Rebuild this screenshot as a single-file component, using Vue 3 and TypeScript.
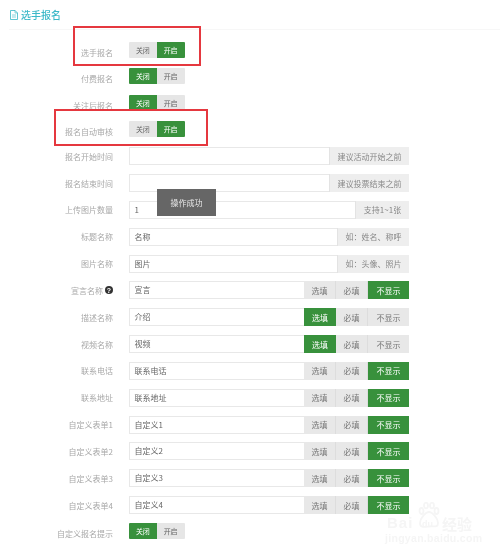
<script setup lang="ts">
type Row =
  | { label: string; kind: 'toggle'; on: number; help?: boolean }
  | { label: string; kind: 'input'; value: string; addon: string; addonClass: string }
  | { label: string; kind: 'triple'; value: string; on: number; help?: boolean }

const toggles: Row[] = [
  { label: '选手报名', kind: 'toggle', on: 1 },
  { label: '付费报名', kind: 'toggle', on: 0 },
  { label: '关注后报名', kind: 'toggle', on: 0 },
  { label: '报名自动审核', kind: 'toggle', on: 1 },
]
const rows: Row[] = [
  { label: '报名开始时间', kind: 'input', value: '', addon: '建议活动开始之前', addonClass: 'wide' },
  { label: '报名结束时间', kind: 'input', value: '', addon: '建议投票结束之前', addonClass: 'wide' },
  { label: '上传图片数量', kind: 'input', value: '1', addon: '支持1~1张', addonClass: 'small' },
  { label: '标题名称', kind: 'input', value: '名称', addon: '如：姓名、称呼', addonClass: 'mid' },
  { label: '图片名称', kind: 'input', value: '图片', addon: '如：头像、照片', addonClass: 'mid' },
  { label: '宣言名称', kind: 'triple', value: '宣言', on: 2, help: true },
  { label: '描述名称', kind: 'triple', value: '介绍', on: 0 },
  { label: '视频名称', kind: 'triple', value: '视频', on: 0 },
  { label: '联系电话', kind: 'triple', value: '联系电话', on: 2 },
  { label: '联系地址', kind: 'triple', value: '联系地址', on: 2 },
  { label: '自定义表单1', kind: 'triple', value: '自定义1', on: 2 },
  { label: '自定义表单2', kind: 'triple', value: '自定义2', on: 2 },
  { label: '自定义表单3', kind: 'triple', value: '自定义3', on: 2 },
  { label: '自定义表单4', kind: 'triple', value: '自定义4', on: 2 },
  { label: '自定义报名提示', kind: 'toggle', on: 0 },
]
const toggleText = ['关闭', '开启']
const tripleText = ['选填', '必填', '不显示']
</script>

<template>
  <div class="page">
    <div class="head">
      <svg class="doc" viewBox="0 0 8 10" width="8" height="10" fill="none" stroke="#3bb8c8" stroke-width="0.8">
        <path d="M.5.5h4.600L7.500 3v6.500H.5z" />
        <path d="M5 .5V3h2.500M2 5h4M2 7h4" stroke-width="0.6" />
      </svg>
      <span class="title">选手报名</span>
    </div>
    <div class="tops">
      <div v-for="r in toggles" :key="r.label" class="row top">
        <label class="lab low">{{ r.label }}</label>
        <div v-if="r.kind === 'toggle'" class="toggle">
          <span v-for="(t, i) in toggleText" :key="t" class="btn" :class="{ on: i === r.on }">{{ t }}</span>
        </div>
      </div>
    </div>
    <div class="rows">
      <div v-for="r in rows" :key="r.label" class="row">
        <label class="lab" :class="{ low: r.kind === 'toggle' }">
          {{ r.label }}
          <svg v-if="r.kind === 'triple' && r.help" class="help" viewBox="0 0 8 8" width="8" height="8">
            <circle cx="4" cy="4" r="4" fill="#333" />
            <text x="4" y="6.500" text-anchor="middle" font-size="7" font-weight="700" fill="#fff" font-family="Liberation Sans, sans-serif">?</text>
          </svg>
        </label>
        <div v-if="r.kind === 'toggle'" class="toggle">
          <span v-for="(t, i) in toggleText" :key="t" class="btn" :class="{ on: i === r.on }">{{ t }}</span>
        </div>
        <div v-else class="group">
          <div class="field">{{ r.value }}</div>
          <div v-if="r.kind === 'input'" class="addon" :class="r.addonClass">{{ r.addon }}</div>
          <div v-else class="triple">
            <span v-for="(t, i) in tripleText" :key="t" class="tbtn" :class="[{ on: i === r.on }, 'w' + i]">{{ t }}</span>
          </div>
        </div>
      </div>
    </div>

    <div class="mark mark-a"></div>
    <div class="mark mark-b"></div>
    <div class="toast">操作成功</div>
    <div class="wm">
      <svg class="paw" viewBox="0 0 22 26" width="22" height="26" fill="none" stroke="#f5f5f5" stroke-width="1.800">
        <ellipse cx="3.500" cy="9" rx="2" ry="3" />
        <ellipse cx="8" cy="3.500" rx="2" ry="2.800" />
        <ellipse cx="14" cy="3.500" rx="2" ry="2.800" />
        <ellipse cx="18.500" cy="9" rx="2" ry="3" />
        <path d="M11 10c-3 0-9 6-9 11s4 4 9 3.500 9 1.500 9-3.500-6-11-9-11z" />
      </svg>
      <span class="wm-bai">Bai</span>
      <span class="wm-du">du</span>
      <span class="wm-jy">经验</span>
      <span class="wm-url">jingyan.baidu.com</span>
    </div>
  </div>
</template>

<style>
html, body { margin: 0; background: #fff; }
</style>

<style scoped>
.page {
  position: relative;
  width: 500px;
  height: 555px;
  overflow: hidden;
  background: #fff;
  font-family: "Noto Sans CJK SC", "Liberation Sans", sans-serif;
  font-size: 8px;
  color: #777;
  filter: blur(0.45px);
}
.head {
  display: flex;
  align-items: center;
  gap: 3px;
  height: 30px;
  box-sizing: border-box;
  margin-left: 9px;
  padding-left: 1px;
  border-bottom: 1px solid #f7f7f7;
}
.title { font-size: 10px; font-weight: 500; color: #3bb8c8; line-height: 29px; }
.tops { display: flex; flex-direction: column; gap: 10.4px; padding-top: 12px; }
.rows { display: flex; flex-direction: column; gap: 8.83px; padding-top: 10.1px; }
.row { display: flex; align-items: flex-start; height: 18px; }
.top { height: 16px; }
.lab {
  width: 113px;
  height: 18px;
  margin-right: 16px;
  flex: none;
  display: flex;
  align-items: center;
  justify-content: flex-end;
  gap: 2px;
  color: #a8a8a8;
  white-space: nowrap;
}
.low { position: relative; top: 1.500px; }
.help { flex: none; }
.toggle { display: flex; height: 16px; width: 55.500px; border-radius: 1px; overflow: hidden; }
.btn {
  flex: 1;
  display: flex;
  align-items: center;
  justify-content: center;
  background: #e6e6e6;
  color: #666;
  font-size: 7px;
}
.btn.on, .tbtn.on { background: #38913c; color: #fff; }
.group { display: flex; width: 280px; height: 18px; }
.field {
  flex: 1;
  min-width: 0;
  box-sizing: border-box;
  border: 1px solid #e8e8e8;
  border-right: 0;
  padding-left: 4.500px;
  line-height: 16px;
  color: #666;
}
.addon {
  flex: none;
  display: flex;
  align-items: center;
  justify-content: center;
  background: #eee;
  border-left: 1px solid #e3e3e3;
  box-sizing: border-box;
  color: #888;
}
.wide { width: 80px; }
.mid { width: 72px; }
.small { width: 54px; }
.triple { display: flex; flex: none; }
.tbtn {
  display: flex;
  align-items: center;
  justify-content: center;
  box-sizing: border-box;
  background: #e8e8e8;
  color: #777;
  border-right: 1px solid #ddd;
}
.tbtn.on { border-right: 0; }
.w0, .w1 { width: 32px; }
.w2 { width: 41px; border-right: 0; }
.mark { position: absolute; box-sizing: border-box; border: 2px solid #e5383f; }
.mark-a { left: 72.500px; top: 26px; width: 128.500px; height: 40px; }
.mark-b { left: 54px; top: 109px; width: 154px; height: 37px; }
.toast {
  position: absolute;
  left: 157px;
  top: 189px;
  width: 59px;
  height: 27px;
  display: flex;
  align-items: center;
  justify-content: center;
  background: #666;
  color: #e8e8e8;
  font-size: 8px;
}
.wm { position: absolute; left: 385px; top: 502px; width: 90px; height: 44px; color: #f5f5f5; }
.wm span { position: absolute; white-space: nowrap; }
.paw { position: absolute; left: 33px; top: 0; }
.wm-bai { left: 2px; top: 12px; font-family: "Liberation Sans", sans-serif; font-size: 15px; font-weight: 700; line-height: 17px; letter-spacing: 1px; }
.wm-du { left: 37px; top: 17px; font-family: "Liberation Sans", sans-serif; font-size: 9px; font-weight: 700; line-height: 10px; }
.wm-jy { left: 57px; top: 12px; font-size: 15px; line-height: 20px; font-weight: 700; }
.wm-url { left: 0; top: 30px; font-family: "Liberation Sans", sans-serif; font-size: 10.500px; font-weight: 700; line-height: 12px; letter-spacing: .3px; }
</style>
